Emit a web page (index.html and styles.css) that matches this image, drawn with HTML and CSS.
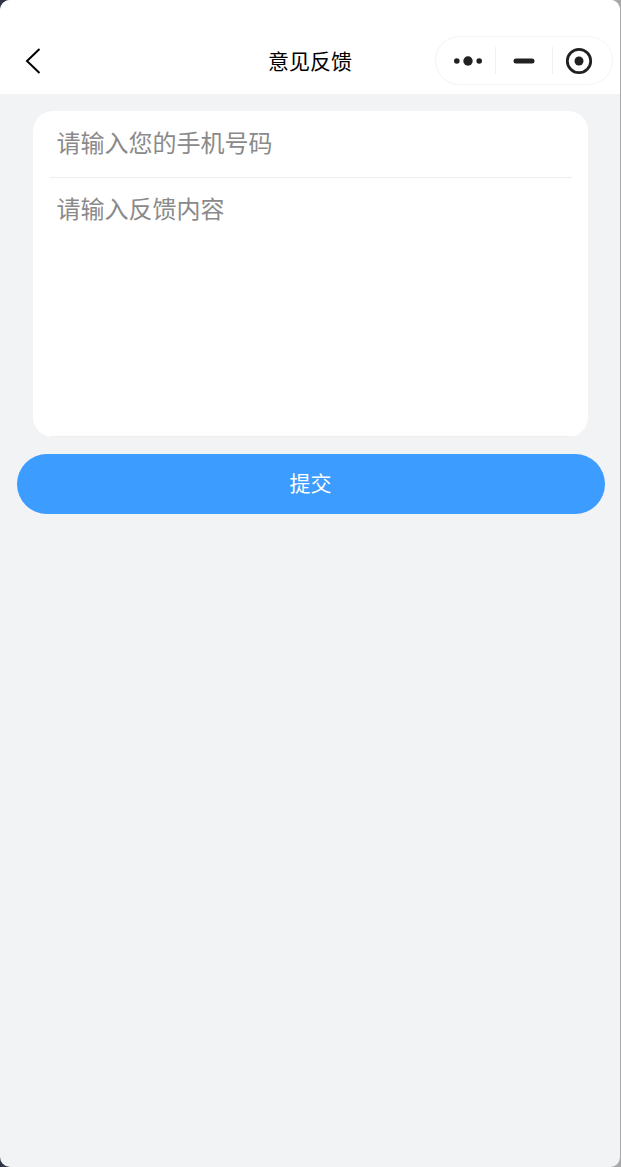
FILE: index.html
```html
<!DOCTYPE html>
<html lang="zh-CN">
<head>
    <meta charset="UTF-8">
    <meta name="viewport" content="width=device-width, initial-scale=1.0">
    <title>意见反馈</title>
    <link rel="stylesheet" href="styles.css">
</head>
<body>
    <div class="window">
        <header class="nav-bar">
            <div class="back-arrow">
                <svg width="16" height="26" viewBox="0 0 16 26"><path d="M14.5 1 L2 13 L14.5 25" fill="none" stroke="#000" stroke-width="2"/></svg>
            </div>
            <div class="nav-title">意见反馈</div>
            <div class="capsule">
                <div class="capsule-item capsule-more">
                    <svg width="30" height="10" viewBox="0 0 30 10"><circle cx="3.8" cy="5" r="2.8" fill="#212121"/><circle cx="15" cy="5" r="4.7" fill="#212121"/><circle cx="26.2" cy="5" r="2.8" fill="#212121"/></svg>
                </div>
                <div class="capsule-item">
                    <svg width="22" height="6" viewBox="0 0 22 6"><rect x="0.5" y="0.5" width="21" height="5" rx="2.5" fill="#212121"/></svg>
                </div>
                <div class="capsule-item capsule-close">
                    <svg width="28" height="28" viewBox="0 0 28 28"><circle cx="14" cy="14" r="11.7" fill="none" stroke="#212121" stroke-width="2.8"/><circle cx="14" cy="14" r="4.5" fill="#212121"/></svg>
                </div>
            </div>
        </header>
        <main class="content">
            <form class="form-card">
                <input class="phone-input" type="text" placeholder="请输入您的手机号码">
                <textarea class="content-input" placeholder="请输入反馈内容"></textarea>
            </form>
            <button class="submit-button" type="button">提交</button>
        </main>
    </div>
</body>
</html>
```

FILE: styles.css
```css
html, body {
    margin: 0;
    padding: 0;
    height: 100%;
}
html {
    background: linear-gradient(to right, #2f3542 50%, #a8a8a8 50%);
}
body {
    font-family: "Liberation Sans", "Noto Sans CJK SC", sans-serif;
}
.window {
    height: 100%;
    box-sizing: border-box;
    display: flex;
    flex-direction: column;
    background-color: #f2f3f5;
    border-right: 1px solid #a8a8a8;
    border-radius: 10px;
    overflow: hidden;
}
.nav-bar {
    height: 94px;
    flex-shrink: 0;
    box-sizing: border-box;
    padding: 36px 7px 9px 25px;
    display: flex;
    align-items: center;
    justify-content: space-between;
    position: relative;
    background-color: #fff;
}
.back-arrow {
    display: flex;
}
.nav-title {
    position: absolute;
    left: 0;
    right: 0;
    top: 48px;
    text-align: center;
    font-size: 21px;
    line-height: 28px;
    color: #000;
}
.capsule {
    width: 178px;
    height: 49px;
    box-sizing: border-box;
    display: grid;
    grid-template-columns: 59px 57px 1fr;
    align-items: center;
    border: 1px solid #f3f3f3;
    border-radius: 25px;
}
.capsule-item {
    height: 27px;
    display: flex;
    align-items: center;
    justify-content: center;
    border-left: 1px solid #efefef;
}
.capsule-more {
    border-left: none;
    padding-left: 5px;
}
.capsule-close {
    padding-right: 7px;
}
.content {
    padding: 17px 16px 0 17px;
    display: flex;
    flex-direction: column;
    align-items: center;
}
.form-card {
    width: 555px;
    height: 326px;
    box-sizing: border-box;
    padding: 0 16px 0 17px;
    display: flex;
    flex-direction: column;
    background-color: #fff;
    border-radius: 20px;
}
.phone-input, .content-input {
    display: block;
    width: 100%;
    box-sizing: border-box;
    border: none;
    border-bottom: 1px solid #eeeeee;
    outline: none;
    resize: none;
    background: transparent;
    padding-left: 6.5px;
    font-family: inherit;
    font-size: 24px;
    color: #333;
}
.phone-input::placeholder, .content-input::placeholder {
    color: #8a8a8a;
    opacity: 1;
}
.phone-input {
    height: 67px;
    padding-top: 1px;
}
.content-input {
    flex: 1;
    padding-top: 15px;
    line-height: 33px;
}
.submit-button {
    width: 588px;
    height: 60px;
    margin-top: 17px;
    padding: 0 0 4px;
    border: none;
    border-radius: 30px;
    background-color: #3d9cff;
    color: #fff;
    font-family: inherit;
    font-size: 21px;
}
```
